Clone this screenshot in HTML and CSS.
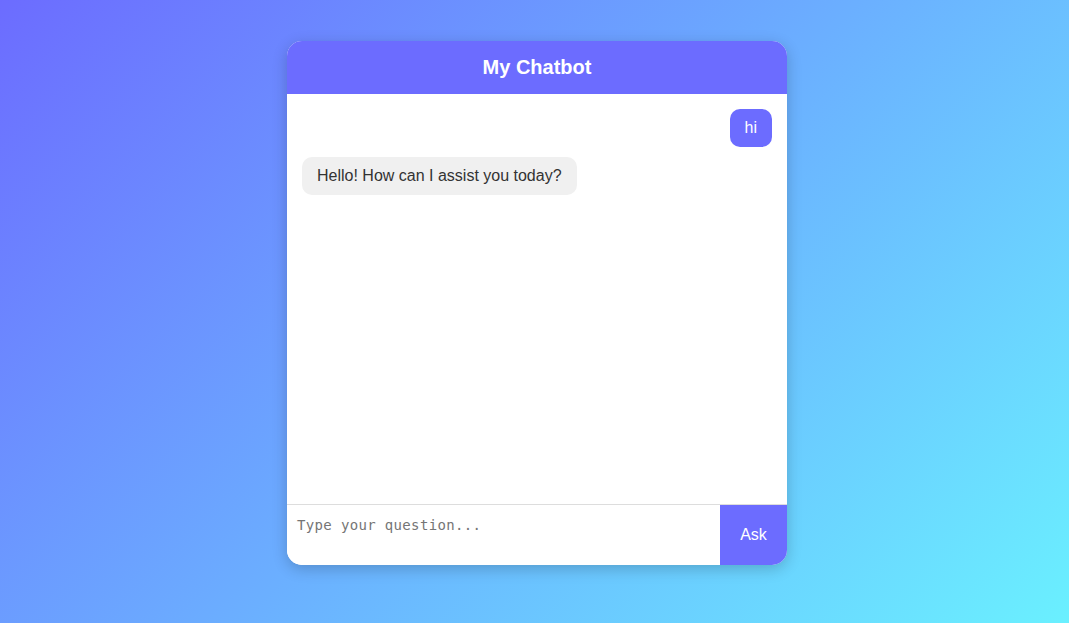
FILE: index.html
```html
<!DOCTYPE html>
<html>
<head>
<meta charset="utf-8">
<link rel="stylesheet" href="styles.css">
</head>
<body>
<div class="page">
  <div class="chat-card">
    <div class="chat-header">My Chatbot</div>
    <div class="chat-messages">
      <div class="msg user">hi</div>
      <div class="msg bot">Hello! How can I assist you today?</div>
    </div>
    <div class="chat-input">
      <textarea class="question" placeholder="Type your question..."></textarea>
      <button class="ask-btn">Ask</button>
    </div>
  </div>
</div>
</body>
</html>
```

FILE: styles.css
```css
html, body {
  margin: 0;
  height: 100%;
}
body {
  background: linear-gradient(135deg, #6c6cff 0%, #6af0ff 100%);
  font-family: "Liberation Sans", Arial, sans-serif;
  overflow: hidden;
}
.page {
  display: flex;
  justify-content: center;
  padding: 41px 0 0 5px;
}
.chat-card {
  width: 500px;
  background: #fff;
  border-radius: 15px;
  overflow: hidden;
  box-shadow: 0 4px 15px rgba(0, 0, 0, 0.2);
  display: flex;
  flex-direction: column;
}
.chat-header {
  background: #6c6cff;
  color: #fff;
  text-align: center;
  font-weight: bold;
  font-size: 20px;
  line-height: 23px;
  padding: 15px;
}
.chat-messages {
  height: 410px;
  box-sizing: border-box;
  padding: 15px;
  display: flex;
  flex-direction: column;
  gap: 10px;
}
.msg {
  font-size: 16px;
  line-height: 18px;
  padding: 10px 15px;
  border-radius: 10px;
  max-width: 70%;
}
.msg.user {
  align-self: flex-end;
  background: #6c6cff;
  color: #fff;
}
.msg.bot {
  align-self: flex-start;
  background: #f0f0f0;
  color: #333;
}
.chat-input {
  display: flex;
  border-top: 1px solid #ddd;
  height: 60px;
}
.question {
  flex: 1;
  border: none;
  outline: none;
  resize: none;
  padding: 12px 10px 10px;
  font-family: "DejaVu Sans Mono", monospace;
  font-size: 14px;
  letter-spacing: 0.35px;
  color: #333;
  background: #fff;
}
.question::placeholder {
  color: #757575;
}
.ask-btn {
  width: 67px;
  border: none;
  background: #6c6cff;
  color: #fff;
  font-family: "Liberation Sans", Arial, sans-serif;
  font-size: 16px;
  padding: 0 20px;
  cursor: pointer;
}
```
